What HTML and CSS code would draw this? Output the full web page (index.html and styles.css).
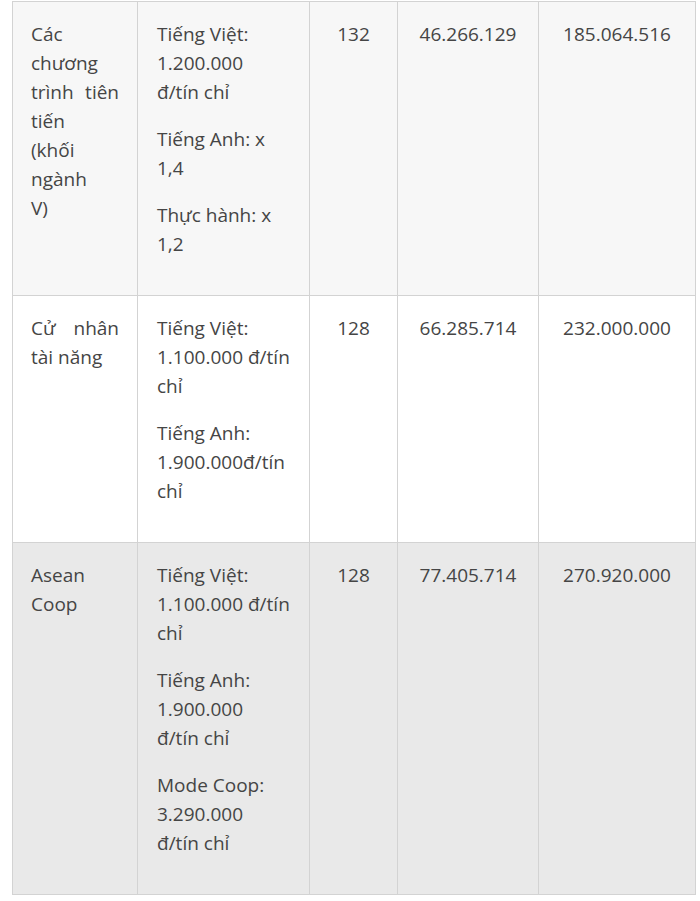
FILE: index.html
```html
<!DOCTYPE html>
<html lang="vi">
<head>
<meta charset="utf-8">
<link rel="stylesheet" href="styles.css">
</head>
<body>
<table class="fees">
  <colgroup>
    <col class="c1"><col class="c2"><col class="c3"><col class="c4"><col class="c5">
  </colgroup>
  <tbody>
    <tr class="row-light">
      <td class="name">
        <p><span class="line">Các</span><span class="line">chương</span><span class="line just">trình tiên</span><span class="line">tiến</span><span class="line">(khối</span><span class="line">ngành</span><span class="line">V)</span></p>
      </td>
      <td class="price">
        <p>Tiếng Việt:<br>1.200.000<br>đ/tín chỉ</p>
        <p>Tiếng Anh: x<br>1,4</p>
        <p>Thực hành: x<br>1,2</p>
      </td>
      <td class="num"><p>132</p></td>
      <td class="num"><p>46.266.129</p></td>
      <td class="num"><p>185.064.516</p></td>
    </tr>
    <tr class="row-white">
      <td class="name">
        <p><span class="line just">Cử nhân</span><span class="line">tài năng</span></p>
      </td>
      <td class="price">
        <p>Tiếng Việt:<br>1.100.000 đ/tín<br>chỉ</p>
        <p>Tiếng Anh:<br>1.900.000đ/tín<br>chỉ</p>
      </td>
      <td class="num"><p>128</p></td>
      <td class="num"><p>66.285.714</p></td>
      <td class="num"><p>232.000.000</p></td>
    </tr>
    <tr class="row-grey">
      <td class="name">
        <p><span class="line">Asean</span><span class="line">Coop</span></p>
      </td>
      <td class="price">
        <p>Tiếng Việt:<br>1.100.000 đ/tín<br>chỉ</p>
        <p>Tiếng Anh:<br>1.900.000<br>đ/tín chỉ</p>
        <p>Mode Coop:<br>3.290.000<br>đ/tín chỉ</p>
      </td>
      <td class="num"><p>128</p></td>
      <td class="num"><p>77.405.714</p></td>
      <td class="num"><p>270.920.000</p></td>
    </tr>
  </tbody>
</table>
</body>
</html>
```
FILE: styles.css
```css
html, body {
  margin: 0;
  padding: 0;
  background: #ffffff;
}

body {
  padding: 1px 0 0 12px;
  font-family: "Open Sans", "Liberation Sans", sans-serif;
  font-size: 19px;
  line-height: 29px;
  color: #454545;
}

.fees {
  border-collapse: collapse;
  table-layout: fixed;
  width: 683px;
}

.c1 { width: 125px; }
.c2 { width: 172px; }
.c3 { width: 88px; }
.c4 { width: 141px; }
.c5 { width: 157px; }

.fees td {
  border: 1px solid #d3d3d3;
  vertical-align: top;
  padding: 18px 18px 18px 18px;
}

.fees p {
  margin: 0 0 18px;
}

.name .line {
  display: block;
  white-space: nowrap;
}

.name .just {
  text-align: justify;
  text-align-last: justify;
  width: 88px;
}

.fees td.price {
  padding-left: 19px;
}

.price p {
  white-space: nowrap;
}

.fees td.num {
  text-align: center;
  padding-left: 8px;
  padding-right: 8px;
}

.row-light td { background: #f7f7f7; }
.row-white td { background: #ffffff; }
.row-grey td { background: #e9e9e9; }
```
